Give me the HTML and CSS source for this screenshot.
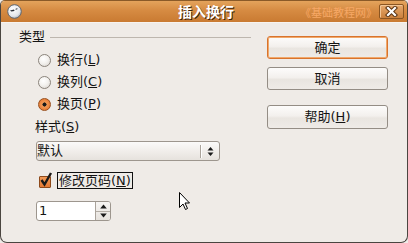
FILE: index.html
```html
<!DOCTYPE html>
<html lang="zh-CN">
<head>
<meta charset="utf-8">
<title>插入换行</title>
<link rel="stylesheet" href="styles.css">
</head>
<body>
<div class="window">
  <div class="titlebar">
    <div class="tb-left">
      <svg class="app-icon" width="15" height="15" viewBox="0 0 15 15">
        <defs>
          <radialGradient id="gi" cx="0.4" cy="0.35" r="0.7">
            <stop offset="0" stop-color="#ffffff"/>
            <stop offset="0.7" stop-color="#e4e6ea"/>
            <stop offset="1" stop-color="#a9aeb6"/>
          </radialGradient>
        </defs>
        <circle cx="7.5" cy="7.5" r="6.8" fill="url(#gi)" stroke="#5e6670" stroke-width="1"/>
        <path d="M3 6.5 L7 5.6 L7.6 7 L4.4 7.6 Z" fill="#2a2e36"/>
        <path d="M8.6 5.2 L10.4 4.8" stroke="#2a2e36" stroke-width="1"/>
      </svg>
    </div>
    <div class="title">插入换行</div>
    <div class="tb-right">
      <span class="watermark">《基础教程网》</span>
      <span class="close">
        <svg width="13" height="11" viewBox="0 0 13 11">
          <path d="M3 2 L10 9 M10 2 L3 9" stroke="#5a3312" stroke-width="4.2" stroke-linecap="square"/>
          <path d="M3 2 L10 9 M10 2 L3 9" stroke="#ffffff" stroke-width="2.2" stroke-linecap="square"/>
        </svg>
      </span>
    </div>
  </div>
  <div class="content">
    <div class="left">
      <div class="section-head"><span>类型</span><span class="rule"></span></div>
      <div class="radios">
        <div class="radio-row"><span class="radio"></span><span>换行(<u>L</u>)</span></div>
        <div class="radio-row"><span class="radio"></span><span>换列(<u>C</u>)</span></div>
        <div class="radio-row"><span class="radio checked"></span><span>换页(<u>P</u>)</span></div>
      </div>
      <div class="field-label">样式(<u>S</u>)</div>
      <div class="combo">
        <span class="combo-text">默认</span>
        <span class="combo-sep"></span>
        <span class="combo-arrows">
          <svg width="7" height="11" viewBox="0 0 7 11">
            <path d="M3.5 1 L6.5 4.5 L0.5 4.5 Z" fill="#1a1a1a"/>
            <path d="M3.5 10 L6.5 6.5 L0.5 6.5 Z" fill="#1a1a1a"/>
          </svg>
        </span>
      </div>
      <div class="check-row">
        <span class="checkbox">
          <svg width="14" height="15" viewBox="0 0 14 15">
            <path d="M2.5 8 L5.5 12.5 L12 1" fill="none" stroke="#1c1a18" stroke-width="2.4"/>
          </svg>
        </span>
        <span class="focus-label">修改页码(<u>N</u>)</span>
      </div>
      <div class="spin">
        <span class="spin-text">1</span>
        <span class="spin-buttons">
          <span class="spin-btn">
            <svg width="7" height="5" viewBox="0 0 7 5"><path d="M3.5 0.5 L6.8 4.5 L0.2 4.5 Z" fill="#1a1a1a"/></svg>
          </span>
          <span class="spin-btn">
            <svg width="7" height="5" viewBox="0 0 7 5"><path d="M3.5 4.5 L6.8 0.5 L0.2 0.5 Z" fill="#1a1a1a"/></svg>
          </span>
        </span>
      </div>
    </div>
    <div class="buttons">
      <div class="btn default">确定</div>
      <div class="btn">取消</div>
      <div class="btn help">帮助(<u>H</u>)</div>
    </div>
  </div>
  <svg class="cursor" width="12" height="19" viewBox="0 0 12 19">
    <path d="M0.5 0.5 L0.5 15.5 L4 12 L6.5 17.5 L8.5 16.5 L6 11 L10.5 11 Z" fill="#ffffff" stroke="#000000" stroke-width="1" stroke-linejoin="miter"/>
  </svg>
</div>
</body>
</html>
```
FILE: styles.css
```css
* {
  box-sizing: border-box;
  margin: 0;
  padding: 0;
}

html, body {
  width: 408px;
  height: 243px;
  overflow: hidden;
  background: #efebe7;
}

body {
  font-family: "DejaVu Sans", "Noto Sans CJK SC", sans-serif;
  font-size: 13px;
  color: #141414;
}

u {
  text-decoration: underline;
  text-underline-offset: 1px;
}

.window {
  position: relative;
  width: 408px;
  height: 243px;
  display: flex;
  flex-direction: column;
  background: #efebe7;
  border: 1px solid #4a4540;
  border-top-color: #8a5a28;
  border-radius: 5px 5px 7px 7px;
  overflow: hidden;
}

.titlebar {
  height: 22px;
  display: grid;
  grid-template-columns: 1fr auto 1fr;
  align-items: center;
  background: linear-gradient(#e4a35c 0%, #d68b42 45%, #c97a32 100%);
  border-bottom: 1px solid #f7f3ef;
  padding: 0 3px 0 6px;
}

.tb-left {
  display: flex;
  align-items: center;
}

.app-icon {
  display: block;
}

.title {
  font-size: 14px;
  font-weight: bold;
  color: #ffffff;
  text-shadow: 1px 1px 0 #3e2208;
  line-height: 16px;
  padding-left: 1px;
}

.tb-right {
  display: flex;
  align-items: center;
  justify-content: flex-end;
  gap: 2px;
}

.watermark {
  font-family: "Noto Sans CJK SC", sans-serif;
  font-size: 11px;
  color: #f7a866;
  line-height: 14px;
}

.close {
  width: 25px;
  height: 15px;
  display: flex;
  align-items: center;
  justify-content: center;
  border: 1px solid #8b5521;
  border-radius: 2px;
  background: linear-gradient(#e6a86c, #cb813d);
  box-shadow: inset 1px 1px 0 #f2c595;
}

.close svg {
  display: block;
}

.content {
  flex: 1;
  display: flex;
  padding: 6px 0 0 18px;
  gap: 16px;
}

.left {
  width: 232px;
  display: flex;
  flex-direction: column;
}

.section-head {
  height: 16px;
  display: flex;
  align-items: center;
  gap: 5px;
  line-height: 16px;
}

.rule {
  flex: 1;
  height: 1px;
  background: #bdb6ae;
  margin-top: 1px;
}

.radios {
  margin-top: 4px;
  padding-left: 19px;
  display: flex;
  flex-direction: column;
}

.radio-row {
  height: 22px;
  display: flex;
  align-items: center;
  gap: 6px;
  line-height: 16px;
}

.radio {
  width: 13px;
  height: 13px;
  border-radius: 50%;
  border: 1px solid #8b847c;
  background: radial-gradient(circle at 40% 35%, #ffffff 0%, #f4f2ef 45%, #d6d1cb 100%);
}

.radio.checked {
  border-color: #9a4f1c;
  background: radial-gradient(circle, #1a1a1a 0 1.8px, #f19a55 2.3px, #ec8640 60%, #c9692a 100%);
}

.field-label {
  margin-top: 4px;
  padding-left: 16px;
  line-height: 16px;
}

.combo {
  margin-top: 6px;
  margin-left: 17px;
  width: 184px;
  height: 20px;
  display: flex;
  align-items: center;
  border: 1px solid #9d968e;
  border-radius: 3px;
  background: linear-gradient(#fbfaf9, #f1eeeb 50%, #e6e2dd);
}

.combo-text {
  flex: 1;
  padding-left: 0;
  line-height: 16px;
}

.combo-sep {
  width: 1px;
  height: 13px;
  background: #aaa39b;
  box-shadow: 1px 0 0 #ffffff;
}

.combo-arrows {
  width: 18px;
  display: flex;
  justify-content: center;
}

.combo-arrows svg {
  display: block;
}

.check-row {
  margin-top: 9px;
  margin-left: 20px;
  height: 20px;
  display: flex;
  align-items: center;
  gap: 6px;
}

.checkbox {
  position: relative;
  width: 12px;
  height: 12px;
  margin-top: 3px;
  border: 1px solid #8e4a1b;
  border-radius: 1px;
  background: linear-gradient(#f29a57, #e57a33);
}

.checkbox svg {
  position: absolute;
  left: -1px;
  top: -5px;
}

.focus-label {
  height: 17px;
  line-height: 15px;
  border: 1px solid #111111;
  padding: 0 1px;
}

.spin {
  margin-top: 11px;
  margin-left: 17px;
  width: 75px;
  height: 20px;
  display: flex;
  border: 1px solid #9d968e;
  border-radius: 3px;
  background: #ffffff;
  overflow: hidden;
}

.spin-text {
  flex: 1;
  padding-left: 2px;
  line-height: 18px;
}

.spin-buttons {
  width: 15px;
  display: flex;
  flex-direction: column;
  border-left: 1px solid #aaa39b;
  background: linear-gradient(#f7f5f3, #e6e2dd);
}

.spin-btn {
  flex: 1;
  display: flex;
  align-items: center;
  justify-content: center;
}

.spin-btn + .spin-btn {
  border-top: 1px solid #b3ada5;
}

.spin-btn svg {
  display: block;
}

.buttons {
  width: 121px;
  display: flex;
  flex-direction: column;
  gap: 8px;
  padding-top: 7px;
}

.btn {
  height: 23px;
  display: flex;
  align-items: center;
  justify-content: center;
  border: 1px solid #948d85;
  border-radius: 3px;
  background: linear-gradient(#fdfcfb 0%, #f3f0ed 45%, #e9e5e0 55%, #efebe7 100%);
  line-height: 16px;
}

.btn.default {
  border: 1px solid #d9732c;
  box-shadow: inset 0 0 0 1px #f0a86a;
}

.btn.help {
  margin-top: 7px;
  height: 24px;
}

.cursor {
  position: absolute;
  left: 178px;
  top: 191px;
}
```
